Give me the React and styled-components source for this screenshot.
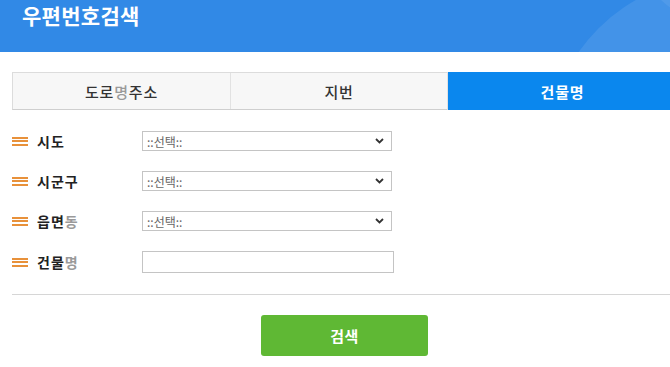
import React from 'react';
import styled, {createGlobalStyle} from 'styled-components';

const GlobalStyle = createGlobalStyle`
  html, body {
    margin: 0;
    padding: 0;
    background: #fff;
    overflow: hidden;
  }
  body {
    font-family: "Noto Sans CJK KR", "Noto Sans", sans-serif;
  }
`

const Page = styled.div`
  width: 689px;
`

const Header = styled.header`
  position: relative;
  height: 52px;
  background: #3189e6;
  overflow: hidden;
  padding-left: 22px;
  box-sizing: border-box;
`

const Title = styled.h1`
  margin: 0;
  padding-top: 0;
  font-size: 21px;
  line-height: 30px;
  font-weight: 700;
  color: #fff;
  letter-spacing: 0.3px;
`

const Circle = styled.span`
  position: absolute;
  border-radius: 50%;
  background: rgba(255, 255, 255, ${props => props.alpha});
  left: ${props => props.x}px;
  top: ${props => props.y}px;
  width: ${props => props.size}px;
  height: ${props => props.size}px;
`

const Content = styled.main`
  padding: 20px 12px 0;
`

const Tabs = styled.div`
  display: grid;
  grid-template-columns: 217px 217px 1fr;
  height: 38px;
  border: 1px solid #dcdcdc;
  border-bottom-color: #cfcfcf;
  border-right: none;
  box-sizing: border-box;
`

const Tab = styled.div`
  display: flex;
  align-items: center;
  justify-content: center;
  font-size: 15px;
  letter-spacing: 0.8px;
  font-weight: ${props => props.active ? 700 : 500};
  color: ${props => props.active ? '#fff' : '#333'};
  background: ${props => props.active ? '#0a87ee' : '#f7f7f7'};
  border-left: ${props => props.first ? 'none' : '1px solid #e2e2e2'};
  margin: ${props => props.active ? '-1px 0 -1px' : '0'};
`

const Dim = styled.span`
  color: #9a9a9a;
`

const Form = styled.div`
  padding-top: 11px;
  display: flex;
  flex-direction: column;
`

const Row = styled.div`
  display: flex;
  align-items: center;
  height: ${props => props.h || 40}px;
`

const Label = styled.div`
  display: flex;
  align-items: center;
  width: 130px;
  font-size: 14px;
  letter-spacing: 1px;
  font-weight: 700;
  color: #222;
`

const Bars = styled.span`
  display: inline-flex;
  flex-direction: column;
  justify-content: space-between;
  width: 16px;
  height: 9px;
  margin-right: 9px;

  &::before, &::after, & > i {
    content: '';
    display: block;
    height: 2px;
    background: #e8913a;
  }
`

const Select = styled.div`
  display: flex;
  align-items: center;
  justify-content: space-between;
  width: 250px;
  height: 20px;
  box-sizing: border-box;
  border: 1px solid #c4c4c4;
  padding: 0 7px 0 4px;
  font-size: 12px;
  color: #666;
  background: #fff;
`

const Input = styled.div`
  width: 252px;
  height: 22px;
  box-sizing: border-box;
  border: 1px solid #c4c4c4;
  background: #fff;
`

const Divider = styled.hr`
  margin: 11px 0 0;
  border: none;
  border-top: 1px solid #d6d6d6;
`

const Actions = styled.div`
  display: flex;
  justify-content: center;
  padding-top: 20px;
`

const Button = styled.button`
  width: 167px;
  height: 41px;
  border: none;
  border-radius: 3px;
  background: #5fb834;
  color: #fff;
  font-family: inherit;
  font-size: 15px;
  letter-spacing: 0.5px;
  font-weight: 700;
`

const Chevron = () => (
    <svg width="9" height="6" viewBox="0 0 9 6">
        <path d="M1 1 L4.5 4.5 L8 1" fill="none" stroke="#333" strokeWidth="1.8"/>
    </svg>
)

const SelectRow = ({children}) => (
    <Row>
        <Label><Bars><i/></Bars>{children}</Label>
        <Select>::선택::<Chevron/></Select>
    </Row>
)

const App = () => {
    return (
        <Page>
            <GlobalStyle/>
            <Header>
                <Title>우편번호검색</Title>
                <Circle x={548} y={-22} size={344} alpha={0.09}/>
                <Circle x={640} y={-120} size={140} alpha={0.07}/>
            </Header>
            <Content>
                <Tabs>
                    <Tab first>도로<Dim>명</Dim>주소</Tab>
                    <Tab>지번</Tab>
                    <Tab active>건물명</Tab>
                </Tabs>
                <Form>
                    <SelectRow>시도</SelectRow>
                    <SelectRow>시군구</SelectRow>
                    <SelectRow>읍면<Dim>동</Dim></SelectRow>
                    <Row h={42}>
                        <Label><Bars><i/></Bars>건물<Dim>명</Dim></Label>
                        <Input/>
                    </Row>
                </Form>
                <Divider/>
                <Actions>
                    <Button>검색</Button>
                </Actions>
            </Content>
        </Page>
    );
};

export default App;
